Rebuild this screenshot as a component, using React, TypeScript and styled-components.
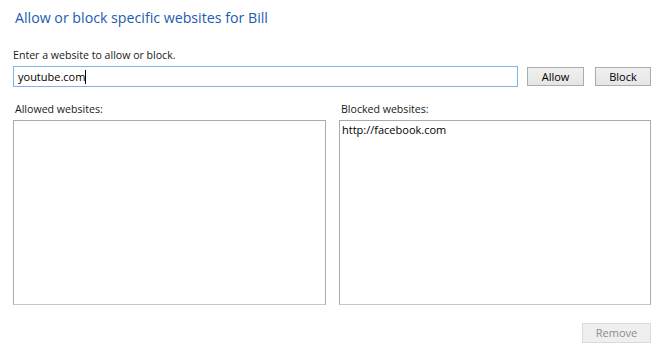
import React from "react";
import styled, { createGlobalStyle } from "styled-components";

const Global = createGlobalStyle`
  html, body { margin: 0; padding: 0; background: #ffffff; }
  body { font-family: "Open Sans", "Noto Sans", sans-serif; }
`;

const Page = styled.div`
  width: 660px;
  height: 359px;
  box-sizing: border-box;
  padding: 8px 9px 0 13px;
  display: flex;
  flex-direction: column;
`;

const Title = styled.h1`
  margin: 0 0 0 2px;
  font-weight: 400;
  font-size: 14.2px;
  line-height: 20px;
  color: #1c5bb0;
`;

const Label = styled.div`
  font-size: 10.6px;
  line-height: 15px;
  color: #1a1a1a;
`;

const EntryLabel = styled(Label)`
  margin-top: 20px;
`;

const EntryRow = styled.div`
  display: flex;
  align-items: center;
  margin-top: 3px;
  height: 21px;
`;

const Input = styled.div`
  width: 506px;
  height: 21px;
  box-sizing: border-box;
  border: 1px solid #7eb4ea;
  padding: 0 4px;
  font-size: 11px;
  line-height: 19px;
  color: #000;
  display: flex;
  align-items: center;
`;

const Caret = styled.span`
  display: inline-block;
  width: 1px;
  height: 14px;
  background: #000;
`;

const Button = styled.div<{ $width: number; $disabled?: boolean }>`
  width: ${(p) => p.$width}px;
  height: ${(p) => (p.$disabled ? 20 : 19)}px;
  box-sizing: border-box;
  border: 1px solid ${(p) => (p.$disabled ? "#dadada" : "#acacac")};
  background: ${(p) =>
    p.$disabled ? "#efefef" : "linear-gradient(#f0f0f0, #e5e5e5)"};
  color: ${(p) => (p.$disabled ? "#8d8d8d" : "#000")};
  font-size: 11px;
  line-height: ${(p) => (p.$disabled ? 18 : 17)}px;
  text-align: center;
`;

const Buttons = styled.div`
  display: flex;
  gap: 11px;
  margin-left: 9px;
`;

const Lists = styled.div`
  display: grid;
  grid-template-columns: 313px 312px;
  column-gap: 13px;
  margin-top: 15px;
`;

const Column = styled.div`
  display: flex;
  flex-direction: column;
`;

const ColumnLabel = styled(Label)`
  margin-left: 2px;
  height: 18px;
`;

const ListBox = styled.div`
  height: 185px;
  box-sizing: border-box;
  border: 1px solid #ababab;
  border-bottom-color: #c8c8c8;
  padding: 1px 2px;
  font-size: 11px;
  line-height: 15px;
  color: #000;
`;

const Footer = styled.div`
  display: flex;
  justify-content: flex-end;
  margin-top: 18px;
`;

export default function App() {
  return (
    <>
      <Global />
      <Page>
        <Title>Allow or block specific websites for Bill</Title>
        <EntryLabel>Enter a website to allow or block.</EntryLabel>
        <EntryRow>
          <Input>
            youtube.com
            <Caret />
          </Input>
          <Buttons>
            <Button $width={57}>Allow</Button>
            <Button $width={56}>Block</Button>
          </Buttons>
        </EntryRow>
        <Lists>
          <Column>
            <ColumnLabel>Allowed websites:</ColumnLabel>
            <ListBox />
          </Column>
          <Column>
            <ColumnLabel>Blocked websites:</ColumnLabel>
            <ListBox>http://facebook.com</ListBox>
          </Column>
        </Lists>
        <Footer>
          <Button $width={69} $disabled>
            Remove
          </Button>
        </Footer>
      </Page>
    </>
  );
}
